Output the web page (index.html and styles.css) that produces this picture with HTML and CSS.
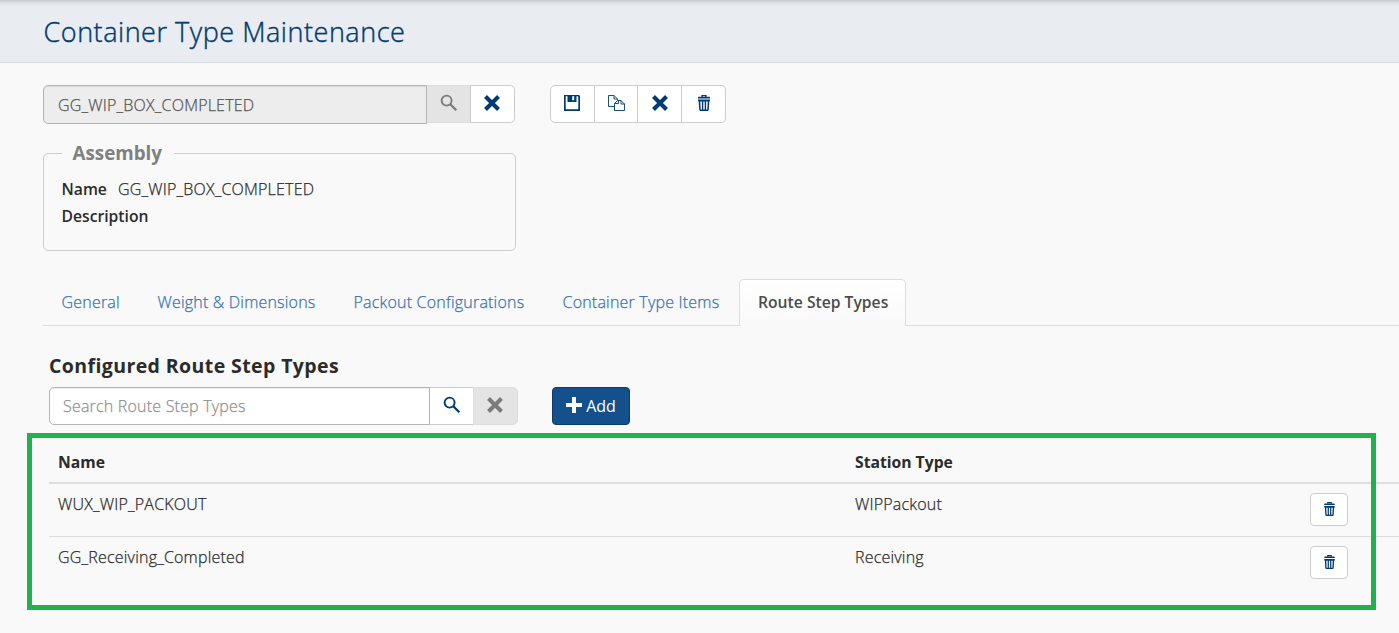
FILE: index.html
```html
<!DOCTYPE html>
<html lang="en">
<head>
<meta charset="utf-8">
<title>Container Type Maintenance</title>
<link rel="stylesheet" href="styles.css">
</head>
<body>
<svg width="0" height="0" class="defs">
  <symbol id="search" viewBox="0 0 18 18"><circle cx="6.6" cy="6.6" r="5" fill="none" stroke="currentColor" stroke-width="1.9"/><path d="M10.3 10.3l6 6" stroke="currentColor" stroke-width="2.3" fill="none"/></symbol>
  <symbol id="close" viewBox="0 0 16 16"><path d="M1.500 1.500l13 13M14.500 1.500l-13 13" stroke="currentColor" stroke-width="4.1" fill="none"/></symbol>
  <symbol id="save" viewBox="0 0 16 16"><path fill="currentColor" fill-rule="evenodd" d="M0 0h15l1 1V16H0zM1.700 1.300V14.200h12.600V1.700l-.4-.4h-1.400V7H3.500V1.300zM8.200 1.300v4h2V1.300z"/></symbol>
  <symbol id="copy" viewBox="0 0 17 17"><path d="M6 11.500H.5V.5H6L9.500 4v1M6 .5V4h3.500M6.500 15.500V11.500M10.500 5.500H13L16.500 9v6.500h-10V8.500L9.500 5.500H11M10.500 5.500V8.500H6.500M13 5.500V9h3.500" fill="none" stroke="currentColor" stroke-width=".9"/></symbol>
  <symbol id="trash" viewBox="0 0 12 16"><path d="M4 2V.7h4V2" fill="none" stroke="currentColor" stroke-width="1.300"/><path fill="currentColor" fill-rule="evenodd" d="M.5 1.700h11l.5 1v.8H0v-.8zM0 4.500h12v1.800h-.7L10.800 15l-1 1H2.200l-1-1L.7 6.300H0zM2.300 6.500l.4 8h1.200v-8zM5.300 6.500v8h1.400v-8zM8.100 6.500v8h1.200l.4-8z"/></symbol>
  <symbol id="plus" viewBox="0 0 16 16"><path d="M8 0v16M0 8h16" stroke="currentColor" stroke-width="4" fill="none"/></symbol>
</svg>
<header class="page-header"><h1>Container Type Maintenance</h1></header>
<main>
  <div class="toolbar">
    <div class="lookup">
      <div class="field disabled">GG_WIP_BOX_COMPLETED</div>
      <button class="btn addon muted"><svg class="i-search"><use href="#search"/></svg></button>
      <button class="btn last"><svg class="i-close"><use href="#close"/></svg></button>
    </div>
    <div class="group">
      <button class="btn"><svg class="i-save"><use href="#save"/></svg></button>
      <button class="btn"><svg class="i-copy"><use href="#copy"/></svg></button>
      <button class="btn"><svg class="i-close"><use href="#close"/></svg></button>
      <button class="btn"><svg class="i-trash"><use href="#trash"/></svg></button>
    </div>
  </div>
  <fieldset class="assembly">
    <legend>Assembly</legend>
    <div class="pair"><b>Name</b><span>GG_WIP_BOX_COMPLETED</span></div>
    <div class="pair"><b>Description</b></div>
  </fieldset>
  <nav class="tabs">
    <a class="general">General</a><a class="weight">Weight &amp; Dimensions</a><a class="packout">Packout Configurations</a><a class="items">Container Type Items</a><a class="active">Route Step Types</a>
  </nav>
  <section class="panel">
    <h2>Configured Route Step Types</h2>
    <div class="toolbar">
      <div class="lookup find">
        <div class="field placeholder">Search Route Step Types</div>
        <button class="btn addon"><svg class="i-search"><use href="#search"/></svg></button>
        <button class="btn last muted"><svg class="i-close"><use href="#close"/></svg></button>
      </div>
      <button class="add"><svg class="i-plus"><use href="#plus"/></svg><span>Add</span></button>
    </div>
    <div class="grid">
      <div class="row head"><span>Name</span><span>Station Type</span></div>
      <div class="row"><span>WUX_WIP_PACKOUT</span><span>WIPPackout</span><button class="small"><svg><use href="#trash"/></svg></button></div>
      <div class="row"><span>GG_Receiving_Completed</span><span>Receiving</span><button class="small"><svg><use href="#trash"/></svg></button></div>
      <div class="highlight"></div>
    </div>
  </section>
</main>
</body>
</html>
```
FILE: styles.css
```css
* { box-sizing: border-box; }
body { margin: 0; height: 633px; overflow: hidden; background: #f9f9f9; color: #2b2b2b; font: 300 16px/22px "Open Sans", sans-serif; letter-spacing: .2px; -webkit-text-stroke: .25px currentColor; }
.defs { position: absolute; }
button { font: inherit; margin: 0; padding: 0; display: flex; align-items: center; justify-content: center; }
.page-header { height: 63px; background: linear-gradient(#c6cacf, #dfe3e8 3px, #e9ecf1 7px); border-bottom: 1px solid #d9dee6; padding: 13px 0 0 43.500px; }
h1 { margin: 0; font-size: 27px; line-height: 38px; font-weight: 300; color: #003b70; letter-spacing: .53px; white-space: nowrap; -webkit-text-stroke-width: .4px; }
main { padding: 22px 0 0 43px; }
.toolbar { display: flex; gap: 35px; height: 39px; align-items: flex-start; }
.lookup, .group { display: flex; }
.field { width: 384px; height: 39px; border: 1px solid #b5b5b5; border-radius: 5px 0 0 5px; background: #fff; padding: 8px 14px; box-shadow: inset 0 1px 1px rgba(0,0,0,.08); white-space: nowrap; }
.field.disabled { background: #ededed; color: #555; }
.btn { height: 38px; width: 44px; background: #fff; border: 1px solid #ccc; border-left-width: 0; color: #003b73; padding-bottom: 2px; }
.btn.addon { width: 43px; }
.btn.last { width: 45px; border-left-width: 1px; border-radius: 0 5px 5px 0; padding-right: 1px; }
.btn.muted { background: #e4e4e4; color: #7b7b7b; border-color: #ddd; }
.lookup .addon { border-right: 0; }
.group .btn:first-child { width: 45px; border-left-width: 1px; border-radius: 5px 0 0 5px; padding-right: 1px; }
.group .btn:nth-child(2) { width: 43px; }
.group .btn:last-child { border-radius: 0 5px 5px 0; }
.i-search { width: 18px; height: 18px; }
.i-close { width: 16px; height: 16px; }
.i-save { width: 16px; height: 16px; }
.i-copy { width: 17px; height: 17px; }
.i-trash { width: 12px; height: 16px; }
.i-plus { width: 16px; height: 16px; }
.assembly { width: 473px; height: 111px; margin: 16px 0 0; border: 1px solid #ccc; border-radius: 5px; padding: 10px 17px 0 17.500px; }
.assembly legend { padding: 0 12px 0 11px; font-size: 18.800px; line-height: 26px; font-weight: 700; color: #808080; }
legend, b, .active, h2, .head, .add { letter-spacing: 0; -webkit-text-stroke-width: 0; }
.pair { display: flex; gap: 11px; height: 27px; line-height: 27px; }
.pair b { font-weight: 600; font-size: 15.700px; }
.tabs { display: flex; margin-top: 28px; height: 47px; border-bottom: 1px solid #ddd; white-space: nowrap; }
.tabs a { color: #3474b2; padding: 12px 0 0 18.500px; width: 96px; }
.tabs .weight { width: 196px; }
.tabs .packout { width: 209px; }
.tabs .items { width: 195px; }
.tabs .active { width: 167px; height: 47px; padding: 11px 0 0 18px; border: 1px solid #ddd; border-bottom: 0; border-radius: 5px 5px 0 0; background: linear-gradient(#fff, #f9f9f9); color: #4c4c4c; font-weight: 600; font-size: 15.700px; }
.panel { padding: 26px 0 0 6px; }
h2 { margin: 0; height: 35px; font-size: 19.500px; letter-spacing: .4px; line-height: 28px; font-weight: 700; }
.find .field { width: 381px; height: 38px; padding: 7px 13px; color: #909090; }
.panel .toolbar { gap: 34px; height: 46px; }
.add { width: 78px; height: 38px; gap: 4px; border: 1px solid #0b3b6c; border-radius: 4px; background: #14508c; color: #fff; font-weight: 400; }
.add svg { position: relative; top: -1px; }
.grid { position: relative; }
.row { display: grid; grid-template-columns: 797px 455px 38px; height: 53px; padding: 9px 0 0 9px; border-bottom: 1px solid #ddd; }
.row:nth-child(3) { border-bottom: 0; }
.row.head { height: 51px; padding-top: 18px; border-bottom: 2px solid #ddd; font-weight: 700; font-size: 15.700px; }
.small { width: 38px; height: 33px; border: 1px solid #ccc; border-radius: 4px; background: #fff; color: #003b73; padding-bottom: 1px; }
.small svg { width: 11px; height: 14px; }
.highlight { position: absolute; left: -22px; top: 0; width: 1349px; height: 177px; border: 5px solid #22b14c; }
```
